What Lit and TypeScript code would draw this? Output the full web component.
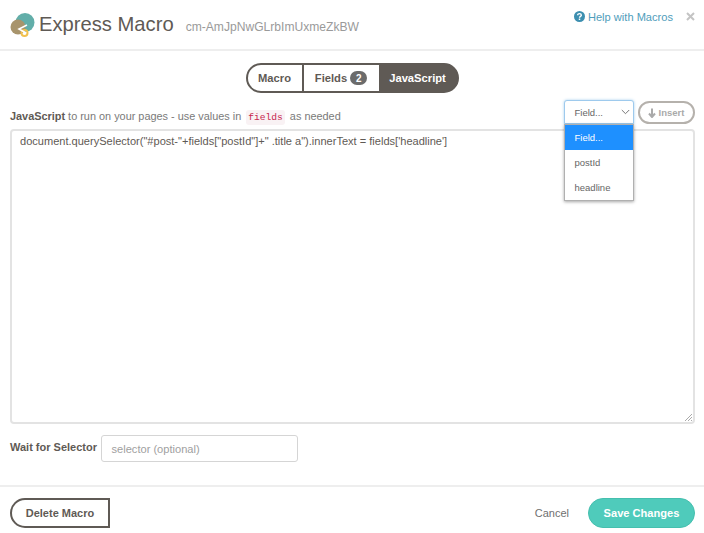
import { LitElement, html, css } from "lit";
import { customElement } from "lit/decorators.js";

@customElement("app-root")
export class AppRoot extends LitElement {
  static styles = css`
    :host { display: block; width: 704px; height: 533px; background: #fff; font-family: "Liberation Sans", Arial, sans-serif; color: #5f5a55; overflow: hidden; }
    * { box-sizing: border-box; }
    .header { height: 51px; border-bottom: 2px solid #eeeeee; display: flex; align-items: center; padding: 0 9px 0 10px; }
    .logo { width: 25px; height: 26px; margin-right: 4px; flex: none; margin-top: -1px; overflow: visible; }
    .title { font-size: 20.2px; color: #5f5a55; }
    .id { font-size: 12.1px; color: #9a9a9a; margin-left: 12px; margin-top: 5px; }
    .spacer { flex: 1; }
    .help { font-size: 11.1px; color: #4f9dbb; display: flex; align-items: center; gap: 3px; margin-top: -16px; }
    .help svg { width: 11px; height: 11px; }
    .close { margin-left: 13px; margin-top: -16px; width: 9px; height: 9px; display: block; }
    .tabs-row { display: flex; justify-content: center; padding-top: 12px; height: 49px; }
    .tabs { display: flex; height: 30px; border: 2px solid #5f5a55; background: #5f5a55; border-radius: 15px; overflow: hidden; font-size: 11.2px; font-weight: 700; width: 213px; }
    .tab { display: flex; align-items: center; justify-content: center; color: #5f5a55; background: #fff; }
    .tab.m { width: 56px; border-right: 2px solid #5f5a55; }
    .tab.f { width: 75px; gap: 3px; }
    .tab.j { flex: 1; background: #5f5a55; color: #fff; }
    .badge { background: #6b6b6b; color: #fff; border-radius: 8px; width: 17px; height: 14px; font-size: 10px; display: flex; align-items: center; justify-content: center; }
    .body { padding: 0 9.5px; position: relative; }
    .label-row { height: 29px; display: flex; align-items: flex-start; justify-content: space-between; font-size: 10.9px; color: #7a7a7a; position: relative; }
    .label { margin-top: 10px; margin-left: 0.5px; }
    .label b { color: #5f5a55; }
    code { font-family: "Liberation Mono", monospace; font-size: 9.6px; color: #c7254e; background: #f9f2f4; padding: 2px 2px; border-radius: 3px; margin: 0 2px; }
    .controls { display: flex; align-items: flex-start; gap: 4px; }
    .select { width: 70px; height: 24px; border: 1px solid #9ecaed; box-shadow: 0 0 3px #a8d0ee; border-radius: 3px 3px 0 0; font-size: 9.5px; color: #666; display: flex; align-items: center; justify-content: space-between; padding: 0 3px 0 10px; background: #fff; }
    .select svg { width: 9px; height: 6px; }
    .insert { width: 57px; height: 23px; margin-top: 1px; border: 2px solid #b5b1ac; border-radius: 12px; font-size: 9.5px; font-weight: 700; color: #aaa; display: flex; align-items: center; justify-content: center; gap: 3px; }
    .insert svg { width: 8px; height: 10px; }
    .menu { position: absolute; left: 554px; top: 24px; width: 70px; background: #fff; border: 1px solid #b0b0b0; box-shadow: 0 1px 3px rgba(0,0,0,.35); font-size: 9.5px; color: #666; z-index: 2; }
    .opt { height: 25px; padding-left: 10px; display: flex; align-items: center; }
    .opt.sel { background: #1e90ff; color: #fff; }
    .editor { height: 295px; border: 2px solid #e3e3e3; border-radius: 4px; padding: 4px 8.5px; font-size: 11.05px; color: #5f5a55; position: relative; line-height: 13px; }
    .grip { position: absolute; right: 1px; bottom: 1px; width: 7px; height: 7px; }
    .wait { display: flex; align-items: center; margin-top: 11px; height: 27px; gap: 4px; }
    .wait b { font-size: 11px; color: #5f5a55; margin-top: -4px; margin-left: 0.5px; width: 87px; white-space: nowrap; }
    .input { width: 197px; height: 27px; border: 1px solid #d5d5d5; border-radius: 3px; padding-left: 9.5px; font-size: 11.1px; color: #a0a0a0; display: flex; align-items: center; }
    .footer { margin-top: 23px; border-top: 2px solid #eeeeee; padding: 11px 9px 0 10px; display: flex; align-items: center; }
    .delete { width: 100px; height: 30px; border: 2px solid #5f5a55; border-radius: 15px 0 0 15px; font-size: 11px; font-weight: 700; color: #5f5a55; display: flex; align-items: center; justify-content: center; }
    .cancel { font-size: 11px; color: #6f6f6f; margin-right: 19px; }
    .save { width: 107px; height: 30px; border-radius: 15px; background: #4fcbbb; border: 1px solid #45bfae; color: #fff; font-size: 11.1px; font-weight: 700; display: flex; align-items: center; justify-content: center; }
  `;

  render() {
    return html`
      <div class="header">
        <svg class="logo" viewBox="0 0 25 26">
          <circle cx="15" cy="11.5" r="9.5" fill="#62aea9"></circle>
          <circle cx="8" cy="16" r="7.5" fill="#a8946c"></circle>
          <circle cx="14.5" cy="22" r="3" fill="none" stroke="#f2c14e" stroke-width="2"></circle>
          <path d="M17 14l-8 4 7 4" stroke="#fff" stroke-width="1.6" fill="none"></path>
        </svg>
        <span class="title">Express Macro</span>
        <span class="id">cm-AmJpNwGLrbImUxmeZkBW</span>
        <span class="spacer"></span>
        <span class="help">
          <svg viewBox="0 0 12 12"><circle cx="6" cy="6" r="6" fill="#3d8fb0"></circle><path d="M4 4.6C4 3.4 5 2.8 6 2.8s2 .6 2 1.7c0 1.4-2 1.4-2 2.8" fill="none" stroke="#fff" stroke-width="1.5"></path><rect x="5.2" y="8.2" width="1.6" height="1.6" fill="#fff"></rect></svg>
          Help with Macros
        </span>
        <svg class="close" viewBox="0 0 9 9"><path d="M1 1l7 7M8 1l-7 7" stroke="#c4c4c4" stroke-width="2"></path></svg>
      </div>
      <div class="tabs-row">
        <div class="tabs">
          <div class="tab m">Macro</div>
          <div class="tab f">Fields <span class="badge">2</span></div>
          <div class="tab j">JavaScript</div>
        </div>
      </div>
      <div class="body">
        <div class="label-row">
          <span class="label"><b>JavaScript</b> to run on your pages - use values in <code>fields</code> as needed</span>
          <div class="controls">
            <div class="select">Field...
              <svg viewBox="0 0 9 6"><path d="M.8 1l3.7 3.7L8.2 1" fill="none" stroke="#777" stroke-width="1"></path></svg>
            </div>
            <div class="insert">
              <svg viewBox="0 0 8 10"><path d="M4 .5v8M1 5.5l3 3.5 3-3.5" fill="none" stroke="#aaa" stroke-width="2"></path></svg>
              Insert
            </div>
          </div>
          <div class="menu">
            <div class="opt sel">Field...</div>
            <div class="opt">postId</div>
            <div class="opt">headline</div>
          </div>
        </div>
        <div class="editor">document.querySelector("#post-"+fields["postId"]+" .title a").innerText = fields['headline']
          <svg class="grip" viewBox="0 0 7 7"><path d="M0 7l7-7M3 7l4-4M6 7l1-1" stroke="#aaa" stroke-width="1"></path></svg>
        </div>
        <div class="wait"><b>Wait for Selector</b><div class="input">selector (optional)</div></div>
      </div>
      <div class="footer">
        <div class="delete">Delete Macro</div>
        <span class="spacer"></span>
        <span class="cancel">Cancel</span>
        <div class="save">Save Changes</div>
      </div>
    `;
  }
}
